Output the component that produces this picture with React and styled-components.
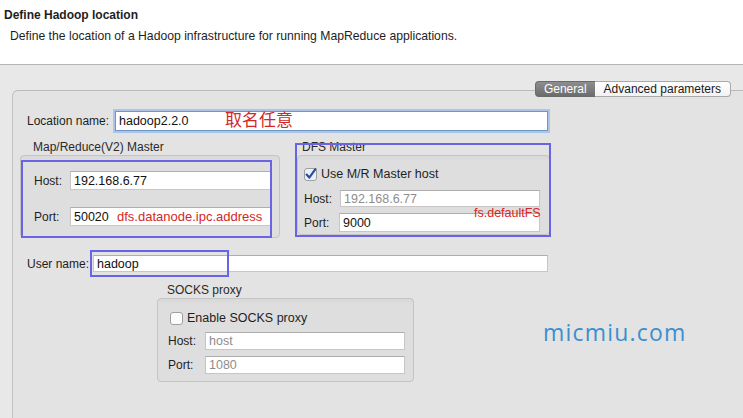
import React from 'react';
import styled, { createGlobalStyle } from 'styled-components';

const GlobalStyle = createGlobalStyle`
    html, body {
        margin: 0;
        padding: 0;
        background: #e8e8e8;
    }
    body {
        font-family: "Liberation Sans", Arial, sans-serif;
        font-size: 12px;
        color: #1e1e1e;
    }
`;

const Page = styled.div`
    position: relative;
    width: 743px;
    height: 418px;
    overflow: hidden;
    background: #e8e8e8;
`;

const Header = styled.div`
    height: 65px;
    background: #ffffff;
    border-bottom: 1px solid #b4b4b4;
    padding: 8px 0 0 4px;
    box-sizing: border-box;
`;

const Title = styled.div`
    font-weight: bold;
    font-size: 12px;
    line-height: 14px;
`;

const Subtitle = styled.div`
    margin: 7px 0 0 6px;
    line-height: 14px;
    font-size: 12.2px;
`;

const Main = styled.div`
    padding: 25px 0 0 12px;
`;

const Panel = styled.div`
    border-top: 1px solid #b9b9b9;
    border-left: 1px solid #c2c2c2;
    border-top-left-radius: 6px;
    background: #e3e3e3;
    height: 340px;
    padding-left: 7px;
`;

const TabBar = styled.div`
    display: flex;
    justify-content: flex-end;
    margin-top: -10px;
    padding-right: 12px;
`;

const Tab = styled.div`
    height: 16px;
    line-height: 14px;
    box-sizing: border-box;
    padding: 0 ${({ selected }) => selected ? '8px' : '9px'};
    font-size: 12px;
    color: ${({ selected }) => selected ? '#ffffff' : '#1a1a1a'};
    background: ${({ selected }) => selected
        ? 'linear-gradient(#8e8e8e, #6c6c6c)'
        : 'linear-gradient(#ffffff, #f2f2f2)'};
    border: 1px solid ${({ selected }) => selected ? '#6a6a6a' : '#a9a9a9'};
    border-radius: ${({ selected }) => selected ? '4px 0 0 4px' : '0 4px 4px 0'};
    ${({ selected }) => selected ? 'border-right: none;' : 'border-left: none;'}
`;

const Row = styled.div`
    position: relative;
    display: flex;
    align-items: center;
    padding-left: ${({ indent }) => indent || 0}px;
    margin-top: ${({ top }) => top || 0}px;
`;

const Label = styled.div`
    width: ${({ w }) => w}px;
    flex: none;
    line-height: 14px;
`;

const InputWrap = styled.div`
    position: relative;
    flex: none;
`;

const TextInput = styled.div`
    width: ${({ w }) => w}px;
    height: ${({ h }) => h}px;
    box-sizing: border-box;
    background: #ffffff;
    border: 1px solid #c6c6c6;
    border-top-color: #aeaeae;
    padding-left: ${({ pad }) => pad || 3}px;
    display: flex;
    align-items: center;
    font-size: 12.5px;
    color: ${({ muted }) => muted ? '#8d8d8d' : '#111111'};
    ${({ focused }) => focused && `
        border: 1px solid #7296c4;
        box-shadow: 0 0 0 2px #a9c6ea;
    `}
`;

const GroupsRow = styled.div`
    display: flex;
    margin-top: 9px;
`;

const GroupColumn = styled.div`
    position: relative;
    width: ${({ w }) => w}px;
    margin-left: ${({ offset }) => offset || 0}px;
    margin-top: ${({ top }) => top || 0}px;
`;

const GroupTitle = styled.div`
    line-height: 14px;
    padding-left: ${({ indent }) => indent}px;
    color: #2a2a2a;
`;

const GroupBox = styled.div`
    margin-top: 1px;
    height: ${({ h }) => h}px;
    box-sizing: border-box;
    border: 1px solid #c4c4c4;
    border-radius: 4px;
    background: linear-gradient(#d9d9d9, #dedede 6px, #dedede);
    padding: ${({ pad }) => pad};
    display: flex;
    flex-direction: column;
`;

const CheckRow = styled.div`
    display: flex;
    align-items: center;
    gap: 4px;
    height: 14px;
    line-height: 14px;
    font-size: 12.5px;
    padding-left: ${({ indent }) => indent || 0}px;
`;

const Mark = styled.div`
    position: absolute;
    box-sizing: border-box;
    border: 2px solid #6a63e4;
    left: ${({ x }) => x}px;
    top: ${({ y }) => y}px;
    width: ${({ w }) => w}px;
    height: ${({ h }) => h}px;
    pointer-events: none;
`;

const Note = styled.span`
    position: absolute;
    left: ${({ x }) => x}px;
    top: ${({ y }) => y}px;
    color: #d42727;
    font-size: ${({ size }) => size}px;
    line-height: 1;
    white-space: nowrap;
    font-family: "Liberation Sans", "Noto Sans CJK SC", sans-serif;
`;

const Watermark = styled.div`
    position: absolute;
    left: 543px;
    top: 316px;
    font-family: "Open Sans", "Liberation Sans", sans-serif;
    font-size: 23px;
    letter-spacing: 1.2px;
    color: #3b8fd0;
`;

const Checkbox = ({ checked }) => (
    <svg width="13" height="13" viewBox="0 0 13 13">
        <rect x="0.5" y="0.5" width="12" height="12" rx="2.5" fill={checked ? '#eaf1fb' : '#fbfbfb'} stroke="#9f9f9f" />
        {checked && (
            <path d="M2.6 6.6 L5.3 9.6 L11.4 1.2" fill="none" stroke="#2a4f9c" strokeWidth="2.2" strokeLinecap="round" strokeLinejoin="round" />
        )}
    </svg>
);

const App = () => {
    return (
        <Page>
            <GlobalStyle />
            <Header>
                <Title>Define Hadoop location</Title>
                <Subtitle>Define the location of a Hadoop infrastructure for running MapReduce applications.</Subtitle>
            </Header>
            <Main>
                <Panel>
                    <TabBar>
                        <Tab selected>General</Tab>
                        <Tab>Advanced parameters</Tab>
                    </TabBar>

                    <Row indent={7} top={14}>
                        <Label w={88}>Location name:</Label>
                        <InputWrap>
                            <TextInput w={433} h={20} focused>hadoop2.2.0</TextInput>
                            <Note x={110} y={1} size={17}>取名任意</Note>
                        </InputWrap>
                    </Row>

                    <GroupsRow>
                        <GroupColumn w={260}>
                            <GroupTitle indent={13}>Map/Reduce(V2) Master</GroupTitle>
                            <GroupBox h={83} pad="15px 7px 11px 13px">
                                <Row>
                                    <Label w={36}>Host:</Label>
                                    <TextInput w={202} h={19}>192.168.6.77</TextInput>
                                </Row>
                                <Row top={17}>
                                    <Label w={36}>Port:</Label>
                                    <InputWrap>
                                        <TextInput w={202} h={19}>50020</TextInput>
                                        <Note x={47} y={3} size={13}>dfs.datanode.ipc.address</Note>
                                    </InputWrap>
                                </Row>
                            </GroupBox>
                            <Mark x={1} y={20} w={251} h={78} />
                        </GroupColumn>

                        <GroupColumn w={253} offset={17}>
                            <GroupTitle indent={5}>DFS Master</GroupTitle>
                            <GroupBox h={80} pad="11px 9px 2px 6px">
                                <CheckRow>
                                    <Checkbox checked />
                                    <span>Use M/R Master host</span>
                                </CheckRow>
                                <Row top={9}>
                                    <Label w={36}>Host:</Label>
                                    <TextInput w={200} h={17} muted>192.168.6.77</TextInput>
                                </Row>
                                <Row top={6}>
                                    <Label w={35}>Port:</Label>
                                    <InputWrap>
                                        <TextInput w={201} h={19}>9000</TextInput>
                                        <Note x={135} y={-6} size={12.5}>fs.defaultFS</Note>
                                    </InputWrap>
                                </Row>
                            </GroupBox>
                            <Mark x={-2} y={3} w={256} h={94} />
                        </GroupColumn>
                    </GroupsRow>

                    <Row indent={7} top={17}>
                        <Label w={66}>User name:</Label>
                        <InputWrap>
                            <TextInput w={455} h={17}>hadoop</TextInput>
                            <Mark x={-3} y={-5} w={139} h={27} />
                        </InputWrap>
                    </Row>

                    <GroupColumn w={257} offset={137} top={11}>
                        <GroupTitle indent={10}>SOCKS proxy</GroupTitle>
                        <GroupBox h={84} pad="12px 8px 6px 10px">
                            <CheckRow indent={2}>
                                <Checkbox />
                                <span>Enable SOCKS proxy</span>
                            </CheckRow>
                            <Row top={7}>
                                <Label w={37}>Host:</Label>
                                <TextInput w={200} h={18} muted>host</TextInput>
                            </Row>
                            <Row top={6}>
                                <Label w={37}>Port:</Label>
                                <TextInput w={200} h={18} muted>1080</TextInput>
                            </Row>
                        </GroupBox>
                    </GroupColumn>
                </Panel>
            </Main>
            <Watermark>micmiu.com</Watermark>
        </Page>
    );
};

export default App;
